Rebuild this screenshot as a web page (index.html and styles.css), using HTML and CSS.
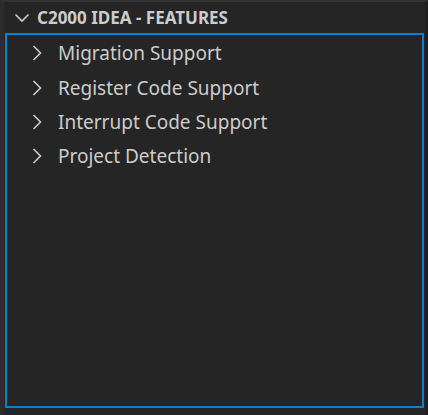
FILE: index.html
```html
<!DOCTYPE html>
<html>
<head>
<meta charset="utf-8">
<link rel="stylesheet" href="styles.css">
</head>
<body>
<div class="frame">
  <div class="pane">
    <div class="header">
      <svg class="hchev" width="16" height="10" viewBox="0 0 16 10"><path d="M1.5 1.5 L8 8 L14.5 1.5" fill="none" stroke="#cccccc" stroke-width="1.6"/></svg>
      <span class="title">C2000 IDEA - FEATURES</span>
    </div>
    <div class="tree">
      <div class="row"><svg class="chev" width="10" height="16" viewBox="0 0 10 16"><path d="M1.5 1 L8.5 8 L1.5 15" fill="none" stroke="#cccccc" stroke-width="1.6"/></svg><span class="label">Migration Support</span></div>
      <div class="row"><svg class="chev" width="10" height="16" viewBox="0 0 10 16"><path d="M1.5 1 L8.5 8 L1.5 15" fill="none" stroke="#cccccc" stroke-width="1.6"/></svg><span class="label">Register Code Support</span></div>
      <div class="row"><svg class="chev" width="10" height="16" viewBox="0 0 10 16"><path d="M1.5 1 L8.5 8 L1.5 15" fill="none" stroke="#cccccc" stroke-width="1.6"/></svg><span class="label">Interrupt Code Support</span></div>
      <div class="row"><svg class="chev" width="10" height="16" viewBox="0 0 10 16"><path d="M1.5 1 L8.5 8 L1.5 15" fill="none" stroke="#cccccc" stroke-width="1.6"/></svg><span class="label">Project Detection</span></div>
    </div>
  </div>
</div>
</body>
</html>
```

FILE: styles.css
```css
html, body {
  margin: 0;
  padding: 0;
  width: 428px;
  height: 415px;
  overflow: hidden;
  background: #2a2a2a;
}
.frame {
  box-sizing: border-box;
  width: 428px;
  height: 415px;
  border-top: 2px solid #333333;
  border-left: 4px solid #2c2c2c;
  border-right: 3px solid #1f1f1f;
  background: #252526;
}
.pane {
  display: flex;
  flex-direction: column;
  height: 100%;
}
.header {
  display: flex;
  align-items: center;
  height: 31px;
  flex: 0 0 31px;
  padding-left: 10px;
  color: #cccccc;
  font-family: "Noto Sans", "Open Sans", sans-serif;
  font-weight: 700;
  font-size: 17px;
}
.hchev {
  display: block;
  margin-right: 7px;
}
.tree {
  box-sizing: border-box;
  margin-left: 1px;
  margin-right: 1px;
  height: 375px;
  flex: 0 0 375px;
  border: 2px solid #0a7fd6;
  padding-top: 0px;
  display: flex;
  flex-direction: column;
}
.row {
  display: flex;
  align-items: center;
  height: 34.4px;
  flex: 0 0 34.4px;
  padding-left: 25px;
  color: #cccccc;
  font-family: "Noto Sans", "Open Sans", sans-serif;
  font-size: 19px;
}
.row:first-child {
  margin-top: 1px;
}
.chev {
  display: block;
  margin-right: 16px;
}
.label {
  white-space: nowrap;
}
```
